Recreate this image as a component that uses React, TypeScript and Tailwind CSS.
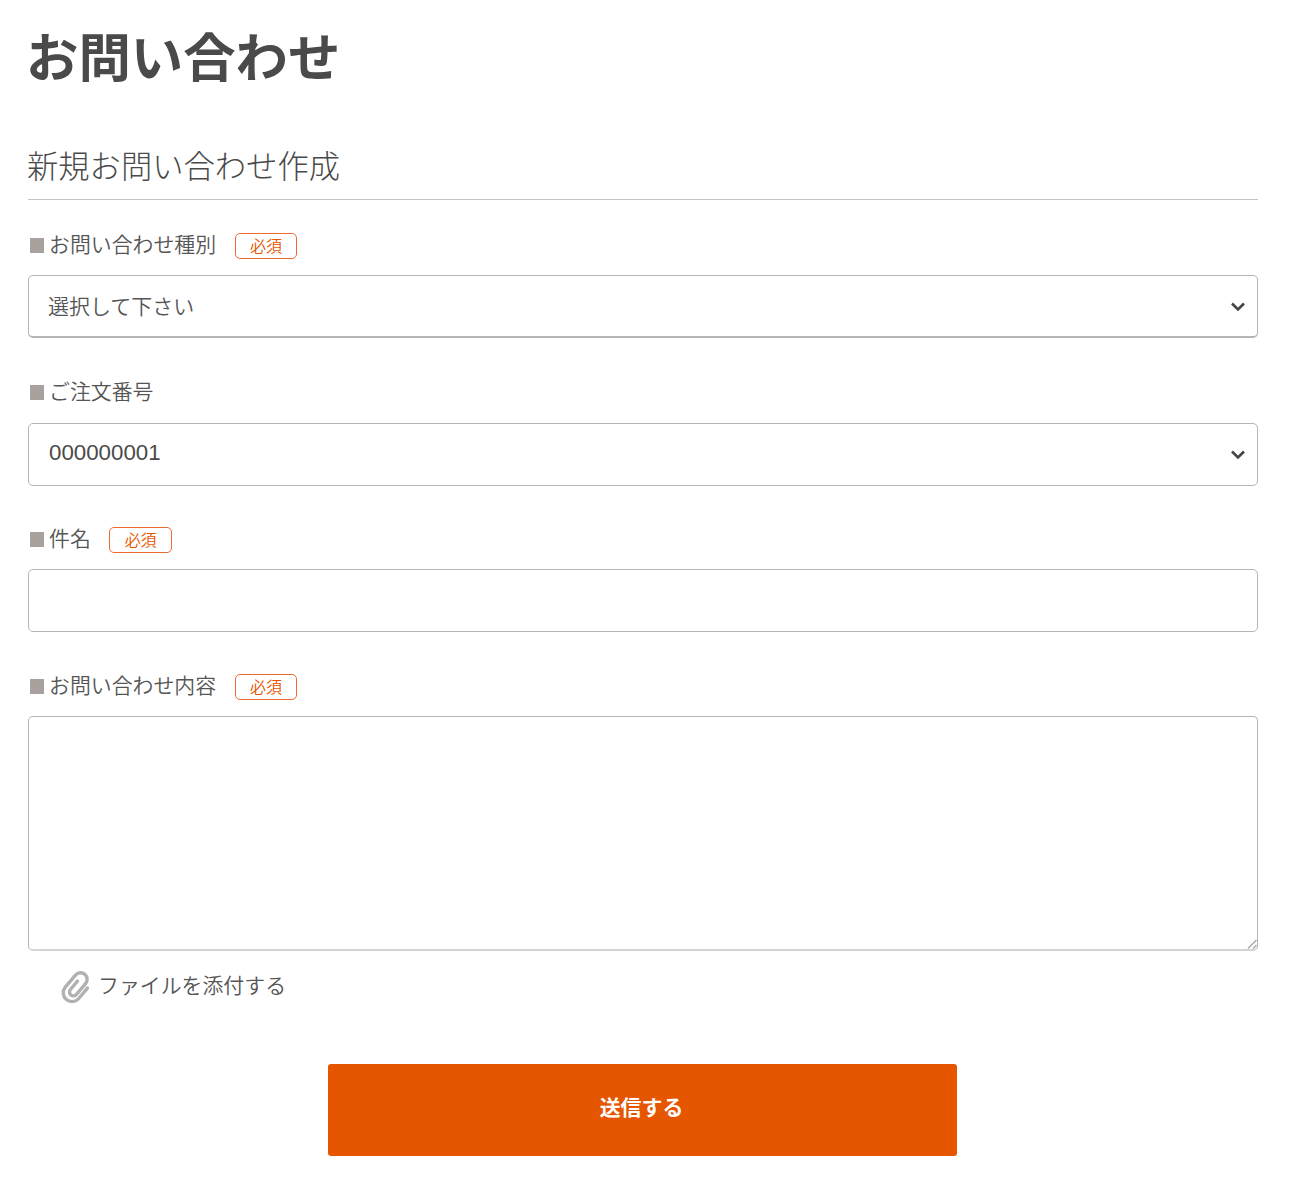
import type { ReactNode } from "react";

type FieldProps = {
  id: string;
  label: string;
  required?: boolean;
  className?: string;
  children: ReactNode;
};

function RequiredBadge() {
  return (
    <span className="ml-[18.5px] mt-0.5 flex h-[26px] w-[62.5px] items-center justify-center rounded-[5px] border border-[#ee6a30] pb-[3px] text-base leading-none font-[350] tracking-[-0.2px] text-[#e85500]">
      必須
    </span>
  );
}

function Field({ id, label, required, className, children }: FieldProps) {
  return (
    <div className={className}>
      <div className="flex h-7 items-center pl-0.5">
        <span className="mr-[5px] h-[15px] w-3.5 bg-[#a8a19e]" />
        <label htmlFor={id} className="pb-[5px] text-[20.9px] leading-7 font-[350] text-[#555]">
          {label}
        </label>
        {required && <RequiredBadge />}
      </div>
      {children}
    </div>
  );
}

function SelectBox({ id, value, className }: { id: string; value: string; className: string }) {
  return (
    <button
      id={id}
      type="button"
      className={`flex h-[63px] w-full items-center justify-between rounded-[5px] border border-[#b5b5b5] pr-3 text-left ${className}`}
    >
      <span>{value}</span>
      <svg className="mt-[3px] h-2.5 w-3.5" viewBox="0 0 14 10" fill="none">
        <path d="M1 1.5 L7 7.5 L13 1.5" stroke="#444" strokeWidth="2.6" />
      </svg>
    </button>
  );
}

function ClipIcon() {
  return (
    <svg className="h-8 w-7 overflow-visible" viewBox="0 0 28 32" fill="none">
      <g transform="rotate(40 14 16)" stroke="#b0b2b1" strokeWidth="3.4" strokeLinecap="round">
        <path d="M23.5 9.5 V23 A8.8 8.8 0 0 1 5.9 23 V7.2 A6.6 6.6 0 0 1 19.1 7.2 V21.5 A3.9 3.9 0 0 1 11.3 21.5 V10.5" />
      </g>
    </svg>
  );
}

export default function App() {
  return (
    <main className="h-[1200px] w-[1293px] bg-white pl-7 pt-7 font-['Noto_Sans_CJK_JP',sans-serif] text-[#4a4a4a]">
      <form className="w-[1230px]">
        <h1 className="-ml-0.5 text-[52.4px] leading-[52px] font-bold">お問い合わせ</h1>
        <h2 className="mt-[65px] border-b border-[#c4c4c4] pb-3.5 text-[31.3px] leading-10 font-light">
          <span className="-ml-px">新規お問い合わせ作成</span>
        </h2>

        <Field id="type" label="お問い合わせ種別" required className="mt-[31px]">
          <SelectBox
            id="type"
            value="選択して下さい"
            className="mt-4 border-b-2 pb-0.5 pl-[19px] text-[21px] leading-[32px] font-[350] text-[#555]"
          />
        </Field>

        <Field id="order" label="ご注文番号" className="mt-10">
          <SelectBox
            id="order"
            value="000000001"
            className="mt-[17px] pb-[3px] pl-5 font-['Liberation_Sans',sans-serif] text-[22.3px] leading-[34px]"
          />
        </Field>

        <Field id="subject" label="件名" required className="mt-[39px]">
          <input
            id="subject"
            className="mt-4 block h-[63px] w-full rounded-[5px] border border-[#b5b5b5] px-5 text-[22px] outline-none"
          />
        </Field>

        <Field id="content" label="お問い合わせ内容" required className="mt-10">
          <div className="relative mt-4">
            <textarea
              id="content"
              className="block h-[235px] w-full resize-none rounded-[5px] border border-b-2 border-[#b5b5b5] border-b-[#d3d5d4] px-5 py-4 text-[22px] outline-none"
            />
            <svg className="absolute right-px bottom-0.5 h-2.5 w-2.5" viewBox="0 0 10 10" fill="none">
              <path d="M1 9.5 L9.5 1 M6 9.5 L9.5 6" stroke="#aaa" strokeWidth="1.5" />
            </svg>
          </div>
        </Field>

        <div className="mt-5 flex h-8 items-center pl-[34px]">
          <ClipIcon />
          <span className="ml-2 pb-[7px] text-[20.9px] leading-7 font-[350] text-[#555]">
            ファイルを添付する
          </span>
        </div>

        <button
          type="button"
          className="ml-[300px] mt-[61px] flex h-[92px] w-[629px] items-center justify-center rounded-[3px] bg-[#e65500] pr-0.5 pb-1.5 text-[20.9px] font-bold text-white"
        >
          送信する
        </button>
      </form>
    </main>
  );
}
